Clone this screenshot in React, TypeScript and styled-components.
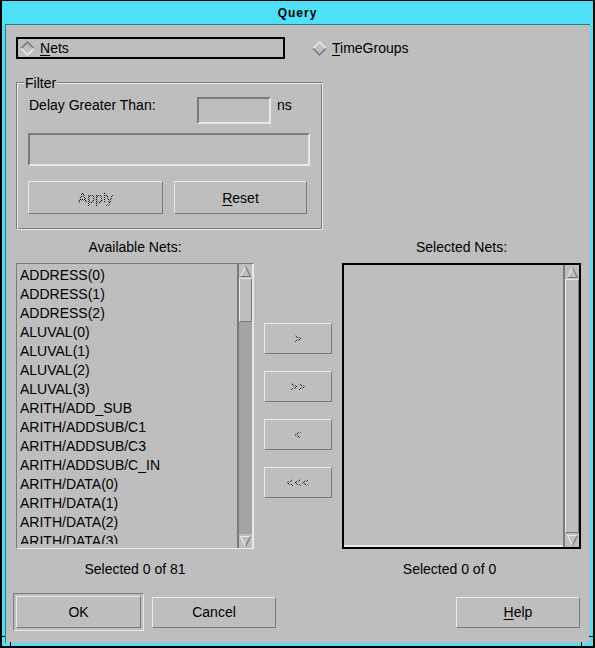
import React from "react";
import styled, { createGlobalStyle } from "styled-components";

const GRAY = "#bebebe";
const LIGHT = "#e9e9e9";
const DARK = "#7b7b7b";
const TROUGH = "#a4a4a4";
const CYAN = "#4fe0f8";
const TEAL = "#23808c";

const Global = createGlobalStyle`
  html, body { margin: 0; padding: 0; background: #000; }
  body { font-family: "Liberation Sans", Arial, sans-serif; }
  *, *::before, *::after { box-sizing: border-box; }
`;

const Win = styled.div`
  position: relative;
  width: 595px;
  height: 648px;
  background: ${CYAN};
  border: solid #000;
  border-width: 1px 2px 2px 2px;
  padding: 0 3px 3px 3px;
  display: flex;
  flex-direction: column;
`;

const Tick = styled.span<{ $x: number; $y: number; $w: number; $h: number }>`
  position: absolute;
  left: ${(p) => p.$x}px;
  top: ${(p) => p.$y}px;
  width: ${(p) => p.$w}px;
  height: ${(p) => p.$h}px;
  background: #000;
`;

const TitleBar = styled.div`
  height: 23px;
  flex: none;
  display: flex;
  align-items: center;
  justify-content: center;
  font: bold 12px "Liberation Sans", Arial, sans-serif;
  letter-spacing: 1px;
  color: #000;
`;

const Client = styled.div`
  flex: 1;
  background: ${GRAY};
  border-top: 1px solid ${TEAL};
  border-left: 1px solid ${TEAL};
  padding: 12px 9px 0 10px;
  display: flex;
  flex-direction: column;
  font-size: 14px;
  color: #000;
`;

const U = styled.span`
  text-decoration: underline;
  text-underline-offset: 2px;
`;

const Stipple = styled.span`
  color: transparent;
  background-image: conic-gradient(#000 25%, transparent 0 50%, #000 0 75%, transparent 0);
  background-size: 2px 2px;
  -webkit-background-clip: text;
  background-clip: text;
  text-decoration-color: #555;
`;

/* radio row */
const RadioRow = styled.div`
  display: flex;
  align-items: center;
  height: 22px;
`;

const RadioItem = styled.div<{ $focus?: boolean }>`
  display: flex;
  align-items: center;
  gap: 5px;
  height: 22px;
  padding-left: 2px;
  width: ${(p) => (p.$focus ? "269px" : "auto")};
  border: 2px solid ${(p) => (p.$focus ? "#000" : "transparent")};
  margin-left: ${(p) => (p.$focus ? "0" : "23px")};
  line-height: 16px;
`;

const DiamondSvg = styled.svg`
  display: block;
  flex: none;
`;

const Diamond = ({ on }: { on: boolean }) => {
  const tl = on ? DARK : LIGHT;
  const br = on ? LIGHT : DARK;
  return (
    <DiamondSvg width="15" height="15" viewBox="0 0 15 15">
      <polygon points="0,7.5 7.5,0 15,7.5 12.5,7.5 7.5,2.5 2.5,7.5" fill={tl} />
      <polygon points="0,7.5 7.5,15 15,7.5 12.5,7.5 7.5,12.5 2.5,7.5" fill={br} />
      <polygon points="2.5,7.5 7.5,2.5 12.5,7.5 7.5,12.5" fill={GRAY} />
    </DiamondSvg>
  );
};

/* filter frame */
const Frame = styled.div`
  position: relative;
  margin-top: 23px;
  width: 307px;
  border: 1px solid;
  border-color: ${DARK} ${LIGHT} ${LIGHT} ${DARK};
  box-shadow: inset 1px 1px 0 ${LIGHT}, inset -1px -1px 0 ${DARK};
  padding: 14px 13px 15px 11px;
  display: flex;
  flex-direction: column;
`;

const FrameLabel = styled.span`
  position: absolute;
  top: -8px;
  left: 7px;
  padding: 0 1px;
  background: ${GRAY};
  line-height: 16px;
`;

const FilterRow = styled.div`
  display: flex;
  align-items: flex-start;
  height: 27px;
`;

const DelayLabel = styled.span`
  width: 169px;
  padding-left: 1px;
  line-height: 16px;
  white-space: nowrap;
`;

const Field = styled.div<{ $w: number; $h: number }>`
  width: ${(p) => p.$w}px;
  height: ${(p) => p.$h}px;
  flex: none;
  background: ${GRAY};
  border: 2px solid;
  border-color: ${DARK} ${LIGHT} ${LIGHT} ${DARK};
`;

const Unit = styled.span`
  margin-left: 6px;
  line-height: 16px;
`;

const BigFieldWrap = styled.div`
  margin-top: 9px;
`;

const FilterButtons = styled.div`
  margin-top: 15px;
  display: flex;
  gap: 11px;
`;

const PushButton = styled.div<{ $w: number; $h: number }>`
  width: ${(p) => p.$w}px;
  height: ${(p) => p.$h}px;
  flex: none;
  display: flex;
  align-items: center;
  justify-content: center;
  background: ${GRAY};
  border: 1px solid;
  border-color: ${LIGHT} ${DARK} ${DARK} ${LIGHT};
  font-size: 14px;
  line-height: 16px;
  color: #000;
`;

const ArrowLabel = styled(Stipple)`
  font-size: 12px;
  letter-spacing: 0.5px;
`;

/* lists */
const ListsGrid = styled.div`
  margin-top: 9px;
  display: grid;
  grid-template-columns: 238px 68px 239px;
  column-gap: 10px;
`;

const Heading = styled.div<{ $shift?: number }>`
  text-align: center;
  line-height: 16px;
  white-space: nowrap;
  padding-right: ${(p) => p.$shift ?? 0}px;
`;

const HeadRow = styled(Heading)`
  margin-bottom: 8px;
`;

const FootRow = styled(Heading)`
  margin-top: 12px;
`;

const ListBox = styled.div`
  height: 286px;
  display: flex;
  border: 1px solid;
  border-color: ${DARK} ${LIGHT} ${LIGHT} ${DARK};
`;

const SelectedBox = styled.div`
  height: 286px;
  display: flex;
  border: 2px solid #000;
`;

const Items = styled.div`
  flex: 1;
  min-width: 0;
  overflow: hidden;
  padding: 2px 0 0 3px;
  margin-bottom: 4px;
`;

const EmptyItems = styled.div`
  flex: 1;
  border-bottom: 2px solid ${LIGHT};
`;

const Item = styled.div`
  line-height: 19px;
  white-space: nowrap;
`;

const SB = styled.div<{ $edge?: boolean }>`
  width: 16px;
  flex: none;
  display: flex;
  flex-direction: column;
  background: ${TROUGH};
  border-left: 2px solid ${DARK};
  border-right: ${(p) => (p.$edge ? `1px solid ${LIGHT}` : "none")};
`;

const ArrowCell = styled.div`
  height: 14px;
  flex: none;
  display: flex;
  align-items: center;
  justify-content: center;
  background: ${GRAY};
`;

const Trough = styled.div`
  flex: 1;
  display: flex;
  flex-direction: column;
`;

const Thumb = styled.div<{ $h?: number }>`
  flex: ${(p) => (p.$h ? `0 0 ${p.$h}px` : "1")};
  background: ${GRAY};
  border: 1px solid;
  border-color: ${LIGHT} ${DARK} ${DARK} ${LIGHT};
`;

const ArrowSvg = styled.svg`
  display: block;
`;

const UpArrow = () => (
  <ArrowSvg width="11" height="11" viewBox="0 0 11 11">
    <polygon points="5.5,0.5 10.5,10.5 0.5,10.5" fill={GRAY} />
    <line x1="0.5" y1="10.5" x2="5.5" y2="0.5" stroke={LIGHT} strokeWidth="1.2" />
    <line x1="5.5" y1="0.5" x2="10.5" y2="10.5" stroke={DARK} strokeWidth="1.2" />
    <line x1="0.5" y1="10.5" x2="10.5" y2="10.5" stroke={DARK} strokeWidth="1.2" />
  </ArrowSvg>
);

const DownArrow = () => (
  <ArrowSvg width="11" height="11" viewBox="0 0 11 11">
    <polygon points="0.5,0.5 10.5,0.5 5.5,10.5" fill={GRAY} />
    <line x1="0.5" y1="0.5" x2="10.5" y2="0.5" stroke={LIGHT} strokeWidth="1.2" />
    <line x1="0.5" y1="0.5" x2="5.5" y2="10.5" stroke={LIGHT} strokeWidth="1.2" />
    <line x1="10.5" y1="0.5" x2="5.5" y2="10.5" stroke={DARK} strokeWidth="1.2" />
  </ArrowSvg>
);

const ScrollBar = ({ thumb, edge }: { thumb?: number; edge?: boolean }) => (
  <SB $edge={edge}>
    <ArrowCell>
      <UpArrow />
    </ArrowCell>
    <Trough>
      <Thumb $h={thumb} />
    </Trough>
    <ArrowCell>
      <DownArrow />
    </ArrowCell>
  </SB>
);

const MoveColumn = styled.div`
  display: flex;
  flex-direction: column;
  gap: 17px;
  padding-top: 60px;
`;

/* bottom */
const BottomRow = styled.div`
  margin-top: 16px;
  display: flex;
  align-items: center;
`;

const DefaultRing = styled.div`
  margin-left: -3px;
  padding: 2px;
  border: 1px solid;
  border-color: ${DARK} ${LIGHT} ${LIGHT} ${DARK};
`;

const CancelSlot = styled.div`
  margin-left: 8px;
`;

const HelpSlot = styled.div`
  margin-left: auto;
  margin-right: 1px;
`;

const nets = [
  "ADDRESS(0)",
  "ADDRESS(1)",
  "ADDRESS(2)",
  "ALUVAL(0)",
  "ALUVAL(1)",
  "ALUVAL(2)",
  "ALUVAL(3)",
  "ARITH/ADD_SUB",
  "ARITH/ADDSUB/C1",
  "ARITH/ADDSUB/C3",
  "ARITH/ADDSUB/C_IN",
  "ARITH/DATA(0)",
  "ARITH/DATA(1)",
  "ARITH/DATA(2)",
  "ARITH/DATA(3)",
];

const moves = [">", ">>", "<", "<<<"];

export default function App() {
  return (
    <>
      <Global />
      <Win>
        <Tick $x={-2} $y={635} $w={5} $h={1} />
        <Tick $x={8} $y={641} $w={1} $h={5} />
        <Tick $x={587} $y={635} $w={6} $h={1} />
        <Tick $x={579} $y={641} $w={1} $h={5} />
        <TitleBar>Query</TitleBar>
        <Client>
          <RadioRow>
            <RadioItem $focus>
              <Diamond on />
              <span>
                <U>N</U>ets
              </span>
            </RadioItem>
            <RadioItem>
              <Diamond on={false} />
              <span>
                <U>T</U>imeGroups
              </span>
            </RadioItem>
          </RadioRow>

          <Frame>
            <FrameLabel>Filter</FrameLabel>
            <FilterRow>
              <DelayLabel>Delay Greater Than:</DelayLabel>
              <Field $w={74} $h={27} />
              <Unit>ns</Unit>
            </FilterRow>
            <BigFieldWrap>
              <Field $w={282} $h={33} />
            </BigFieldWrap>
            <FilterButtons>
              <PushButton $w={135} $h={33}>
                <Stipple>
                  <U>A</U>pply
                </Stipple>
              </PushButton>
              <PushButton $w={133} $h={33}>
                <span>
                  <U>R</U>eset
                </span>
              </PushButton>
            </FilterButtons>
          </Frame>

          <ListsGrid>
            <HeadRow>Available Nets:</HeadRow>
            <div />
            <HeadRow>Selected Nets:</HeadRow>

            <ListBox>
              <Items>
                {nets.map((n) => (
                  <Item key={n}>{n}</Item>
                ))}
              </Items>
              <ScrollBar thumb={44} edge />
            </ListBox>
            <MoveColumn>
              {moves.map((m) => (
                <PushButton key={m} $w={68} $h={31}>
                  <ArrowLabel>{m}</ArrowLabel>
                </PushButton>
              ))}
            </MoveColumn>
            <SelectedBox>
              <EmptyItems />
              <ScrollBar />
            </SelectedBox>

            <FootRow>Selected 0 of 81</FootRow>
            <div />
            <FootRow $shift={24}>Selected 0 of 0</FootRow>
          </ListsGrid>

          <BottomRow>
            <DefaultRing>
              <PushButton $w={125} $h={32}>OK</PushButton>
            </DefaultRing>
            <CancelSlot>
              <PushButton $w={124} $h={31}>Cancel</PushButton>
            </CancelSlot>
            <HelpSlot>
              <PushButton $w={124} $h={31}>
                <span>
                  <U>H</U>elp
                </span>
              </PushButton>
            </HelpSlot>
          </BottomRow>
        </Client>
      </Win>
    </>
  );
}
